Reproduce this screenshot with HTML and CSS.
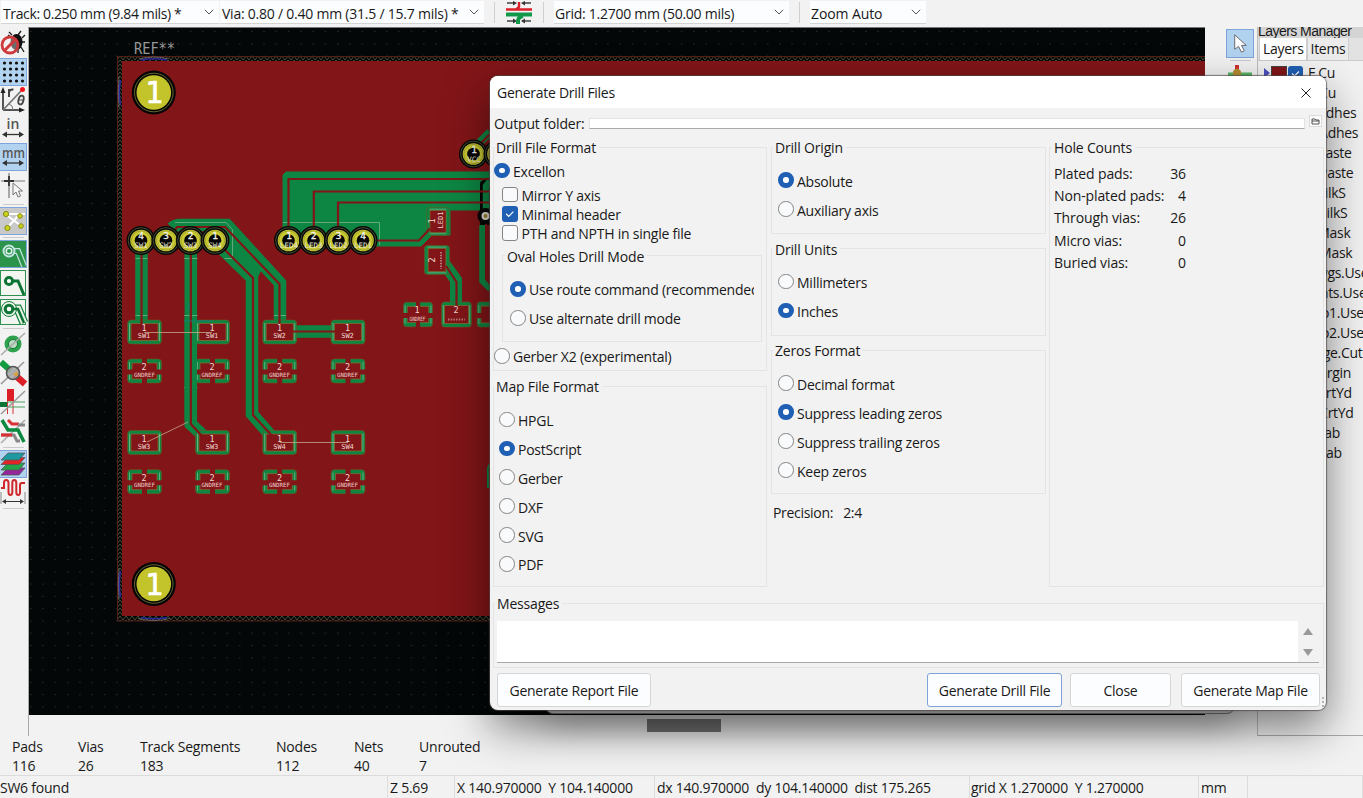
FILE: index.html
```html
<!DOCTYPE html>
<html lang="en">
<head>
<meta charset="utf-8">
<title>PCB Editor</title>
<link rel="stylesheet" href="styles.css">
</head>
<body>
<div class="app">
  <header class="topbar">
    <div class="combo combo-track"><span>Track: 0.250 mm (9.84 mils) *</span><svg class="chev" viewBox="0 0 10 6"><path d="M.8.8 5 5 9.2.8"/></svg></div>
    <div class="combo combo-via"><span>Via: 0.80 / 0.40 mm (31.5 / 15.7 mils) *</span><svg class="chev" viewBox="0 0 10 6"><path d="M.8.8 5 5 9.2.8"/></svg></div>
    <i class="vsep"></i>
    <svg class="width-icon" viewBox="0 0 26 25"><path d="M1 2h8m8 0h8M1 20h8m8 0h8" stroke="#444" stroke-width="1.300"/><path d="M7 0 11 2 7 4.500zM19 0 15 2l4 2.500zM7 17.500l4 2.500-4 2.500zM19 17.500 15 20l4 2.500z" fill="#333"/><path d="M0 8.500h26M10 8.500l3-2.500V1" stroke="#dc1f28" stroke-width="2.400" fill="none"/><path d="M0 13.500h26" stroke="#12984a" stroke-width="4"/><path d="M17 15q-5 1-5 5v3" stroke="#12984a" stroke-width="4" fill="none"/></svg>
    <i class="vsep"></i>
    <div class="combo combo-grid"><span>Grid: 1.2700 mm (50.00 mils)</span><svg class="chev" viewBox="0 0 10 6"><path d="M.8.8 5 5 9.2.8"/></svg></div>
    <i class="vsep"></i>
    <div class="combo combo-zoom"><span>Zoom Auto</span><svg class="chev" viewBox="0 0 10 6"><path d="M.8.8 5 5 9.2.8"/></svg></div>
  </header>

  <div class="workspace">
    <nav class="tools">
      <div class="tool"><svg viewBox="0 0 28 28"><g stroke="#1b1b1b" stroke-width="1.300" fill="none"><path d="M12 7 9 4M18 7l3-4M22 10l3-3M22 14h3M21 19l3 5M18 21v4M11 9 8 7"/></g><ellipse cx="16.500" cy="14" rx="6" ry="8" fill="#111"/><circle cx="10" cy="17" r="8" fill="#f2f2f2" fill-opacity=".4" stroke="#cf3a3c" stroke-width="2.800"/><path d="m4.500 22.500 11-11" stroke="#cf3a3c" stroke-width="3"/></svg></div>
      <div class="tool on"><svg viewBox="0 0 28 28"><g stroke="#111" stroke-width="3.200" stroke-linecap="round" stroke-dasharray="0 6"><path d="M4.500 5h19M4.500 11h19M4.500 17h19M4.500 23h19"/></g></svg></div>
      <div class="tool"><svg viewBox="0 0 28 28"><path d="M3 25V6M3 25h18" stroke="#222" stroke-width="1.500"/><path d="M.5 8 3 2l2.500 6zM19 22.500l6 2.500-6 2.500z" fill="#222"/><path d="M3 25 21 6" stroke="#777" stroke-width="1.800"/><path d="M9 19q4 1 4 6" stroke="#777" fill="none"/><circle cx="22.500" cy="4.500" r="2.500" fill="#f3141c"/><path d="M9 12V4m0 3q1-3 4.500-2.500" stroke="#444" stroke-width="2" fill="none"/><ellipse cx="21" cy="15" rx="2.500" ry="4.500" fill="none" stroke="#444" stroke-width="1.800" transform="rotate(15 21 15)"/><path d="M19 15h4" stroke="#444"/></svg></div>
      <div class="tool"><svg viewBox="0 0 28 28"><text x="6.500" y="15" class="unit" textLength="13">in</text><path d="M4 20.500h18" stroke="#333" stroke-width="1.300"/><path d="M7 17.500l-5 3 5 3zM19 17.500l5 3-5 3z" fill="#333"/></svg></div>
      <div class="tool on"><svg viewBox="0 0 28 28"><text x="2" y="15" class="unit" textLength="23" lengthAdjust="spacingAndGlyphs">mm</text><path d="M4 20h18" stroke="#333" stroke-width="1.300"/><path d="M7 17l-5 3 5 3zM19 17l5 3-5 3z" fill="#333"/></svg></div>
      <div class="tool after-gap"><svg viewBox="0 0 28 28"><path d="M1 9h24M9 1v8M9 9v17" stroke="#777" stroke-width="1.200"/><path d="M4 9h10M9 4v10" stroke="#333" stroke-width="1.800"/><path d="M13 11v12l3-3 2 5 2.500-1-2-5h4z" fill="#f6f6f6" stroke="#777"/></svg></div>
      <i class="hsep"></i>
      <div class="tool on grey"><svg viewBox="0 0 28 28"><path d="M5 7 20 18M7 21 19 8M5 7h20" stroke="#fff" stroke-width="2"/><g fill="#ccd31d" stroke="#858b12"><circle cx="6" cy="7" r="2.600"/><circle cx="20" cy="9" r="2.300"/><circle cx="7.500" cy="21" r="2.600"/><circle cx="21" cy="19" r="2.300"/></g></svg></div>
      <i class="hsep"></i>
      <div class="tool on green"><svg viewBox="0 0 28 28"><path d="M9 11h9l6 15" stroke="#c5e5e4" stroke-width="6" fill="none"/><path d="M9 11h9l6 15" stroke="#2c944a" stroke-width="3.600" fill="none"/><circle cx="9" cy="11" r="5.500" fill="#2c944a" stroke="#c5e5e4" stroke-width="2"/><circle cx="9" cy="11" r="2.800" fill="none" stroke="#e5f5f5" stroke-width="1.500"/></svg></div>
      <div class="tool framed after-one"><svg viewBox="0 0 28 28"><path d="M9 11h9l6 14" stroke="#0c7434" stroke-width="3" fill="none"/><circle cx="9" cy="11" r="3.600" fill="#fff" stroke="#0c7434" stroke-width="3"/></svg></div>
      <div class="tool framed"><svg viewBox="0 0 28 28"><path d="M9 10h9l6 14" stroke="#16823d" stroke-width="9" fill="none"/><path d="M9 10h9l6 14" stroke="#e9f3e7" stroke-width="6.500" fill="none"/><circle cx="9" cy="10" r="7.500" fill="#e9f3e7" stroke="#16823d"/><path d="M9 10h9l6 14" stroke="#0c7434" stroke-width="2.600" fill="none"/><circle cx="9" cy="10" r="3.800" fill="#fff" stroke="#0c7434" stroke-width="3"/></svg></div>
      <i class="hsep"></i>
      <div class="tool"><svg viewBox="0 0 28 28"><circle cx="13" cy="14" r="8.500" fill="#2da14c"/><circle cx="13" cy="14" r="4.500" fill="#b9dcc0" stroke="#14783a" stroke-width="1"/><path d="M1 25 25 3" stroke="#aaa" stroke-width="1.500"/></svg></div>
      <div class="tool after-one"><svg viewBox="0 0 28 28"><path d="M1 25 24 3" stroke="#999" stroke-width="1.600"/><path d="M1 3l10 9" stroke="#129c42" stroke-width="6"/><path d="m15 16 10 9" stroke="#dc1e27" stroke-width="6.500"/><circle cx="13" cy="14" r="6.500" fill="#aaa" fill-opacity=".88" stroke="#555" stroke-width="1.600"/><path d="m13 16 4-4 1 5z" fill="#dda22e"/></svg></div>
      <div class="tool"><svg viewBox="0 0 28 28"><path d="M7.500 12v14M13 12v14" stroke="#d43238"/><path d="M7 1h7v12H7z" fill="#dc1e27"/><path d="M0 14h7v5H0z" fill="#0c7434"/><path d="M7 14h18M7 19h18" stroke="#46a25d"/><path d="M1 26 25 3" stroke="#999" stroke-width="1.500"/></svg></div>
      <div class="tool after-one"><svg viewBox="0 0 28 28"><path d="M1 26 25 3" stroke="#aaa" stroke-width="1.500"/><path d="M8 3l4 4h7" stroke="#db3136" stroke-width="3" fill="none"/><path d="M18 8h7" stroke="#888" stroke-width="3" fill="none"/><path d="M1 18h13l3 6h3" stroke="#888" stroke-width="3" fill="none"/><path d="M1 18h11" stroke="#db3136" stroke-width="3"/><path d="m2 3 6 10h10l6 12" stroke="#0d8840" stroke-width="3.500" fill="none"/></svg></div>
      <i class="hsep tight"></i>
      <div class="tool on"><svg viewBox="0 0 28 28"><g stroke="#555" stroke-width=".8"><path d="m1 25 7-7h17l-6 7z" fill="#94259a"/><path d="m1 20 7-7h17l-6 7z" fill="#23a44b"/><path d="m1 14.500 7-7h17l-6 7z" fill="#e32427"/><path d="m1 10 7-7h17l-6 7z" fill="#1c9aa0"/></g></svg></div>
      <div class="tool"><svg viewBox="0 0 28 28"><path d="M1 11h3V6q0-3 2.200-3T8.500 6v9q0 3 1.900 3t1.900-3V6q0-3 2-3t2 3v9q0 3 1.900 3T20 15V8q0-2 2-2h3" stroke="#d0272d" stroke-width="2" fill="none"/><path d="M1 15v12M25 15v12" stroke="#888"/><path d="M3 24.500h20" stroke="#333"/><path d="m6 22-4 2.500 4 2.500zM20 22l4 2.500-4 2.500z" fill="#333"/></svg></div>
      <i class="hsep tight"></i>
    </nav>

    <main class="canvas">
      <svg class="board" viewBox="28 27 1177 688">
        <defs>
          <pattern id="dots" x="24.300" y="31" width="12.280" height="12.280" patternUnits="userSpaceOnUse"><rect x="6" width="1" height="1" fill="#394040"/></pattern>
          <pattern id="hatch" width="6" height="4" patternUnits="userSpaceOnUse"><path d="m0 0 3 4 3-4" stroke="#6b6a42" stroke-width=".7" fill="none"/></pattern>
          <g id="solid"><rect x="-17" y="-12" width="34" height="24" rx="3.500" fill="#0d8643" stroke="#73561f" stroke-width=".6"/><rect x="-13.500" y="-8.500" width="27" height="17" fill="#821518" stroke="#7e6c2f" stroke-width=".8"/><path d="M-15-9V9M15-9V9" stroke="#8fc09b" stroke-width=".7"/></g>
          <g id="thermal"><rect x="-17" y="-12" width="34" height="24" rx="3.500" fill="#0d8643" stroke="#73561f" stroke-width=".6"/><rect x="-12.500" y="-8" width="25" height="16" fill="#821518" stroke="#7e6c2f" stroke-width=".8"/><path d="M-15-9V9M15-9V9" stroke="#8fc09b" stroke-width=".7"/><path d="M0-13v26M-18 1h36" stroke="#821518" stroke-width="5"/></g>
          <g id="pin"><circle r="14.500" fill="#070806"/><circle r="12.800" fill="none" stroke="#5d6a48" stroke-width=".7"/><circle r="10.800" fill="#c7c832"/><circle r="9.600" fill="none" stroke="#85862c" stroke-width=".5"/><circle r="6.300" fill="#050505"/></g>
          <g id="hole"><circle r="22" fill="#050505"/><circle r="19.300" fill="none" stroke="#7d7c3c" stroke-width=".8"/><circle r="17.300" fill="#c3c32c"/></g>
        </defs>
        <rect x="28" y="27" width="1177" height="688" fill="#030708"/>
        <rect x="28" y="27" width="1177" height="688" fill="url(#dots)"/>
        <path d="M118 57h1087v4H122v555h1083v5H118z" fill="url(#hatch)"/>
        <path d="M1205 56.500H117.500V621H1205" fill="none" stroke="#6b2419" stroke-width=".8"/>
        <g fill="none" stroke-width="1"><path d="M141 60q13-2.500 26 0M120.500 80q-2.500 13 0 25M120.500 571q-2.500 13 0 26M141 617.500q13 2.500 26 0" stroke="#29299b" stroke-width="1.600"/><path d="M139 59q15-4 30 0M138 618.500q16 4 32 0M119 76q-1.500 16 0 32M119 568q-1.500 16 0 32" stroke="#8d8d8d" stroke-width=".6"/></g>
        <rect x="122" y="61" width="1083" height="555" fill="#821518"/>
        <text x="134" y="53.500" class="ref" textLength="41" lengthAdjust="spacingAndGlyphs">REF**</text>

        <g class="pour">
          <path d="M141.500 250v75M190.800 250v174l14 13M212 239l40 39v136l20 23M172 228q3-3 8-3h47l53 58v42M290 331.500h48" stroke-width="12.500"/>
          <path d="M223 243l3-15 36 40-4 8z" stroke="none" fill="#0d8643"/>
          <path d="M286 172h204v38h-40v25h-18l-11 11H283V175z" stroke="none" fill="#0d8643"/>
          <path d="M443 262l13 18v26" stroke-width="12"/>
          <path d="M478 144l12-12" stroke-width="8"/>
        </g>
        <path d="M175 222.500h51l6.500 7v29h-8M283 222.500h96.500V245M135.500 258.500h12M184 258.500h13.500M135.500 315.500h12M184 315.500h13.500M274 315.500h12M184 387.500h13.500" stroke="#8bb993" stroke-width=".7" fill="none"/>
        <path d="M480 225V184q0-4 5-4h5v45z" fill="#050505"/>
        <path d="M482.500 225v56l8 8M490 181l-4 5v30" stroke="#0d8643" stroke-width="6.500" fill="none"/><path d="M486 216v63l5 6" stroke="#821518" stroke-width="2" fill="none"/>
        <circle cx="485.500" cy="216" r="8" fill="#050505"/><circle cx="485.500" cy="216" r="4" fill="#e1dfd4"/><circle cx="485.500" cy="216" r="2" fill="#9d812f"/>

        <g><use href="#solid" x="144.500" y="332"/><use href="#solid" x="212.500" y="332"/><use href="#solid" x="279.700" y="332"/><use href="#solid" x="348" y="332"/><use href="#thermal" x="144.500" y="371"/><use href="#thermal" x="212.500" y="371"/><use href="#thermal" x="279.700" y="371"/><use href="#thermal" x="348" y="371"/><use href="#solid" x="144.500" y="442.500"/><use href="#solid" x="212.500" y="442.500"/><use href="#solid" x="279.700" y="442.500"/><use href="#solid" x="348" y="442.500"/><use href="#thermal" x="144.500" y="481.700"/><use href="#thermal" x="212.500" y="481.700"/><use href="#thermal" x="279.700" y="481.700"/><use href="#thermal" x="348" y="481.700"/></g>
        <g transform="translate(418 314.500) scale(.86 1.020)"><use href="#thermal"/></g><g transform="translate(456.500 314.500) scale(.88 1.050)"><use href="#solid"/></g><g transform="translate(492 314.500) scale(.88 1.050)"><use href="#thermal"/></g>
        <g transform="translate(438 221.500) rotate(90) scale(.82 .95)"><use href="#solid"/></g><g transform="translate(437 260) rotate(90) scale(.86 1.050)"><use href="#solid"/></g>
        <path d="M190.800 318v102" stroke="#0d8643" stroke-width="12.500"/>
        <g class="core"><path d="M141.500 250v78M190.800 250v174l14 15M218 243l35 35v137l22 24M172 234l5-7h48l54.500 57v42M292 331.500h46M288.500 235v-56H490M313.800 235v-43.500H490M338 235v-32.500H490M373 240.500h46l11-12M446 266l10.500 16v26M476 148l14-14"/></g>
        <path d="M144 332.500h68M147 442l41-20M280 442.500h68" stroke="#c5a688" stroke-width=".8"/>
        <path d="M186 309h3v-7M184 321h28" stroke="#197e83" stroke-width=".8" fill="none"/>
        <path d="M490 464q-3 4-2 10v14" stroke="#0d8643" stroke-width="2" fill="none"/>

        <g><use href="#pin" x="141" y="240.500"/><use href="#pin" x="166" y="240.500"/><use href="#pin" x="190.500" y="240.500"/><use href="#pin" x="215" y="240.500"/><use href="#pin" x="288.500" y="240.500"/><use href="#pin" x="313.500" y="240.500"/><use href="#pin" x="338.500" y="240.500"/><use href="#pin" x="363" y="240.500"/><use href="#pin" x="473.500" y="154"/><use href="#pin" x="498" y="154"/></g>
        <g class="pin-text"><text x="141" y="238.700">4</text><text x="166" y="238.700">3</text><text x="190.500" y="238.700">2</text><text x="215" y="238.700">1</text><text x="289" y="238.700">1</text><text x="313.500" y="238.700">2</text><text x="338.500" y="238.700">3</text><text x="363" y="238.700">4</text><text x="474" y="153">1</text></g>
        <g class="pin-net"><text x="141" y="248">SW1</text><text x="166" y="248">SW2</text><text x="190.500" y="248">SW3</text><text x="215" y="248">SW4</text><text x="289" y="247.500">LED4</text><text x="313.500" y="247.500">LED3</text><text x="338.500" y="247.500">LED2</text><text x="363" y="247.500">LED1</text><text x="474" y="162">VCC</text></g>
        <g class="pad-text"><text x="144" y="331">1</text><text x="212" y="331">1</text><text x="279.500" y="331">1</text><text x="347.500" y="331">1</text><text x="144" y="369.500">2</text><text x="212" y="369.500">2</text><text x="279.500" y="369.500">2</text><text x="347.500" y="369.500">2</text><text x="144" y="442">1</text><text x="212" y="442">1</text><text x="279.500" y="442">1</text><text x="347.500" y="442">1</text><text x="144" y="480.500">2</text><text x="212" y="480.500">2</text><text x="279.500" y="480.500">2</text><text x="347.500" y="480.500">2</text><text x="417" y="313">1</text><text x="456" y="313">2</text><text transform="translate(435 221) rotate(-90)">1</text><text transform="translate(435 260) rotate(-90)">2</text></g>
        <g class="pad-net"><text x="144" y="338">SW1</text><text x="212" y="338">SW1</text><text x="279.500" y="338">SW2</text><text x="347.500" y="338">SW2</text><text x="144" y="448.500">SW3</text><text x="212" y="448.500">SW3</text><text x="279.500" y="448.500">SW4</text><text x="347.500" y="448.500">SW4</text><text transform="translate(443 220) rotate(-90)">LED1</text></g>
        <g class="pad-gnd"><text x="144.500" y="376.500">GNDREF</text><text x="212" y="376.500">GNDREF</text><text x="279.500" y="376.500">GNDREF</text><text x="347.500" y="376.500">GNDREF</text><text x="144.500" y="487">GNDREF</text><text x="212" y="487">GNDREF</text><text x="279.500" y="487">GNDREF</text><text x="347.500" y="487">GNDREF</text><text x="417.500" y="321" textLength="16" lengthAdjust="spacingAndGlyphs">GNDREF</text></g>
        <path d="M448 319.500h17M441 252v17" stroke="#b9777a" stroke-width="2" stroke-dasharray="1.500 1.200"/>
        <use href="#hole" x="153.800" y="92.500"/><use href="#hole" x="153.800" y="584"/>
        <text x="154" y="102.800" class="hole-text">1</text><text x="154" y="594.800" class="hole-text">1</text>
      </svg>
    </main>

    <nav class="draw-tools">
      <div class="cursor"><svg viewBox="0 0 28 28"><path d="M8 5v15l4-3 3 6 3-1.500-3-5.500h5z" fill="#fff" stroke="#666"/></svg></div>
      <i class="hsep"></i>
      <svg class="via-tool" viewBox="0 0 24 16"><path d="M9 0v6" stroke="#cf3030" stroke-width="4"/><path d="M0 9.500h24" stroke="#55b463" stroke-width="4"/><circle cx="9" cy="8" r="4.200" fill="#b58d32"/></svg>
    </nav>

    <aside class="layers">
      <div class="caption"><span>Layers Manager</span></div>
      <div class="tabs"><span class="tab active">Layers</span><span class="tab">Items</span></div>
      <div class="layer-list">
        <div class="layer"><i class="arrow"></i><i class="swatch"></i><svg class="tick" viewBox="0 0 15 15"><path d="m4 7.500 2.500 2.500L11 5.500"/></svg><span>F.Cu</span></div>
        <div class="layer">B.Cu</div><div class="layer">F.Adhes</div><div class="layer">B.Adhes</div><div class="layer">F.Paste</div><div class="layer">B.Paste</div><div class="layer">F.SilkS</div><div class="layer">B.SilkS</div><div class="layer">F.Mask</div><div class="layer">B.Mask</div><div class="layer">Dwgs.User</div><div class="layer">Cmts.User</div><div class="layer">Eco1.User</div><div class="layer">Eco2.User</div><div class="layer">Edge.Cuts</div><div class="layer">Margin</div><div class="layer">F.CrtYd</div><div class="layer">B.CrtYd</div><div class="layer">F.Fab</div><div class="layer">B.Fab</div>
      </div>
    </aside>
  </div>

  <section class="board-info">
    <div class="scroll-thumb"></div>
    <dl class="stats">
      <div class="s-pads"><dt>Pads</dt><dd>116</dd></div><div class="s-vias"><dt>Vias</dt><dd>26</dd></div><div class="s-track"><dt>Track Segments</dt><dd>183</dd></div><div class="s-nodes"><dt>Nodes</dt><dd>112</dd></div><div class="s-nets"><dt>Nets</dt><dd>40</dd></div><div><dt>Unrouted</dt><dd>7</dd></div>
    </dl>
  </section>
  <footer class="status"><span>SW6 found</span><span>Z 5.69</span><span>X 140.970000  Y 104.140000</span><span>dx 140.970000  dy 104.140000  dist 175.265</span><span>grid X 1.270000  Y 1.270000</span><span>mm</span><span></span></footer>

  <div class="back-window"></div>
  <div class="dialog" role="dialog">
    <div class="title"><span>Generate Drill Files</span><svg viewBox="0 0 10 10"><path d="m.5.5 9 9m0-9-9 9"/></svg></div>
    <div class="output"><label>Output folder:</label><div class="path-field"></div><div class="browse"><svg viewBox="0 0 9 7"><path d="M1 6V1h3l1 1h3v4zM1 3h7" fill="none" stroke="#444" stroke-width=".9"/></svg></div></div>
    <div class="columns">
      <div class="column">
        <fieldset class="drill-format"><legend>Drill File Format</legend>
          <div class="opt excellon"><i class="radio sel"></i>Excellon</div>
          <div class="checks"><div><i class="check"></i>Mirror Y axis</div><div><i class="check sel"><svg viewBox="0 0 15 15"><path d="m4 7.500 2.500 2.500L11 5.500"/></svg></i>Minimal header</div><div><i class="check"></i>PTH and NPTH in single file</div></div>
          <fieldset class="oval"><legend>Oval Holes Drill Mode</legend><div class="opt clip"><i class="radio sel"></i><span>Use route command (recommended)</span></div><div class="opt"><i class="radio"></i>Use alternate drill mode</div></fieldset>
          <div class="opt gerber"><i class="radio"></i>Gerber X2 (experimental)</div>
        </fieldset>
        <fieldset class="map-format"><legend>Map File Format</legend><div class="opt"><i class="radio"></i>HPGL</div><div class="opt"><i class="radio sel"></i>PostScript</div><div class="opt"><i class="radio"></i>Gerber</div><div class="opt"><i class="radio"></i>DXF</div><div class="opt"><i class="radio"></i>SVG</div><div class="opt"><i class="radio"></i>PDF</div></fieldset>
      </div>
      <div class="column mid">
        <fieldset class="short"><legend>Drill Origin</legend><div class="opt"><i class="radio sel"></i>Absolute</div><div class="opt"><i class="radio"></i>Auxiliary axis</div></fieldset>
        <fieldset class="short"><legend>Drill Units</legend><div class="opt"><i class="radio"></i>Millimeters</div><div class="opt"><i class="radio sel"></i>Inches</div></fieldset>
        <fieldset class="zeros"><legend>Zeros Format</legend><div class="opt"><i class="radio"></i>Decimal format</div><div class="opt"><i class="radio sel"></i>Suppress leading zeros</div><div class="opt"><i class="radio"></i>Suppress trailing zeros</div><div class="opt"><i class="radio"></i>Keep zeros</div></fieldset>
        <div class="precision"><span>Precision:</span><span>2:4</span></div>
      </div>
      <div class="column">
        <fieldset class="holes"><legend>Hole Counts</legend><div><span>Plated pads:</span><b>36</b></div><div><span>Non-plated pads:</span><b>4</b></div><div><span>Through vias:</span><b>26</b></div><div><span>Micro vias:</span><b>0</b></div><div><span>Buried vias:</span><b>0</b></div></fieldset>
      </div>
    </div>
    <fieldset class="messages"><legend>Messages</legend><div class="log"><div class="bar"><i class="up"></i><i class="down"></i></div></div></fieldset>
    <div class="buttons"><div class="btn report">Generate Report File</div><div class="btn primary">Generate Drill File</div><div class="btn close">Close</div><div class="btn map">Generate Map File</div></div>
    <i class="grip"></i>
  </div>
</div>
</body>
</html>
```
FILE: styles.css
```css
* { box-sizing: border-box; }
body { margin: 0; overflow: hidden; background: #f2f2f2; color: #191919; font: 14px/20px "Open Sans", "Noto Sans", sans-serif; letter-spacing: -.3px; }
i { display: block; font-style: normal; }
svg { display: block; }
.app { position: relative; width: 1363px; height: 798px; overflow: hidden; display: flex; flex-direction: column; }

.topbar { height: 27px; flex: none; display: flex; align-items: flex-start; padding: 1px 0 0 1px; }
.combo { height: 23px; flex: none; background: #fcfdff; border-bottom: 1px solid #d4d4d4; display: flex; align-items: center; justify-content: space-between; padding: 3px 5px 0 2px; white-space: nowrap; }
.chev { width: 10px; height: 6px; margin-bottom: 3px; fill: none; stroke: #555; stroke-width: 1; }
.combo-track { width: 218px; margin-right: 1px; letter-spacing: -.37px; }
.combo-via { width: 264px; letter-spacing: -.23px; }
.vsep { width: 1px; height: 21px; background: #cfcfcf; margin: 1px 10px 0; }
.width-icon { width: 26px; height: 25px; margin: 0 1px; }
.combo-grid { width: 235px; padding-left: 1px; letter-spacing: -.26px; }
.combo-zoom { width: 116px; padding-left: 1px; letter-spacing: -.1px; }

.workspace { display: grid; grid-template-columns: 28px 1177px 52px 106px; height: 688px; flex: none; }
.tools { padding-top: 2px; overflow: hidden; display: flex; flex-direction: column; }
.tools > * { flex: none; }
.tool { width: 27px; height: 28px; margin-bottom: .5px; }
.tool svg { width: 28px; height: 28px; margin-top: -1px; }
.tool.on { border: 1px solid #7ea6dc; background: #b2d3f0; margin-left: -1px; width: 28px; }
.tool.grey { background: #c9c9c9; }
.tool.green { background: #2c944a; }
.tool.framed { border: 1px solid #2f9150; background: #f3f5f0; width: 26px; height: 26px; margin: 1px 0 1.5px; }
.tool.framed svg { margin-left: -1px; }
.tool.after-gap { margin-top: 1.5px; }
.tool.after-one { margin-top: .5px; }
.tool.framed.after-one { margin-top: 1.5px; }
.unit { font: 600 14px "Open Sans", sans-serif; fill: #555; letter-spacing: 0; }
.hsep { width: 21px; height: 1px; background: #cbcbcb; margin: 2px 0 2px 3px; }
.hsep.tight { margin: 1px 0 1.5px 3px; }
.canvas { border-top: 1px solid #777; overflow: hidden; border-left: 1px solid #aaa; }
.board { width: 1177px; height: 688px; margin: -1px 0 0 -1px; }
.pour path { fill: none; stroke: #0d8643; }
.pour path[fill] { fill: #0d8643; }
.core path { fill: none; stroke: #821518; stroke-width: 2.2; }
.ref { font: 15px "DejaVu Sans Mono", monospace; fill: #979797; }
.board text { letter-spacing: 0; }
.pin-text, .pin-net, .pad-text, .pad-net, .pad-gnd { text-anchor: middle; font-family: "DejaVu Sans Mono", monospace; fill: #f2f2ee; }
.pin-text { font-size: 9.5px; stroke: #f2f2ee; stroke-width: .3; }
.pin-net { font-size: 7.5px; fill: #e6e6da; }
.pad-text { font-size: 8.5px; fill: #efd9d3; }
.pad-net { font-size: 7px; fill: #efd9d3; }
.pad-gnd { font-size: 5.8px; fill: #efd0cb; }
.hole-text { font: 30px "DejaVu Sans Mono", monospace; text-anchor: middle; fill: #fff; stroke: #fff; stroke-width: .6; }

.draw-tools { padding: 2px 0 0 21px; }
.cursor { width: 28px; height: 29px; background: #b2d3f0; border: 1px solid #7ea6dc; }
.cursor svg { width: 27px; height: 27px; }
.draw-tools .hsep { margin: 2px 0 4px 4px; }
.via-tool { width: 24px; height: 16px; margin-left: 2px; }

.layers { height: 709px; border-left: 1px solid #bdbdbd; border-bottom: 1px solid #aaa; overflow: hidden; }
.caption { height: 11px; overflow: hidden; background: #d4d4d4; white-space: nowrap; font: 14px/20px "Liberation Sans", sans-serif; }
.caption span { display: block; margin-top: -6px; padding-left: 0; letter-spacing: -.55px; }
.tabs { height: 23px; display: flex; background: #e2e2e2; border-bottom: 1px solid #ccc; }
.tab { padding: 1px 3px 0; border: 1px solid #cfcfcf; border-width: 0 1px; background: #ececec; }
.tab.active { background: #fff; margin-left: 1px; padding: 1px 2px 0 3px; }
.layer-list { padding: 1px 0 0 49px; margin-top: 1px; }
.layer { height: 20px; line-height: 20px; white-space: nowrap; display: flex; align-items: center; }
.layer:first-child { margin-left: -43px; }
.arrow { border: 5px solid transparent; border-left: 6px solid #4b51c4; border-right: 0; }
.swatch { width: 16px; height: 15px; background: #821518; border: 1px solid #444; margin-left: 1px; }
.tick { width: 15px; height: 15px; background: #1f5fb4; border-radius: 3px; margin: 0 5px 0 1px; }
.tick path, .check path { fill: none; stroke: #fff; stroke-width: 1.1; }

.board-info { height: 60px; flex: none; padding-top: 4px; }
.scroll-thumb { width: 74px; height: 13px; margin-left: 647px; background: #777; }
.stats { display: flex; margin: 5px 0 0 12px; line-height: 19px; letter-spacing: -.2px; }
.stats dd { margin: 0; }
.s-pads { width: 66px; } .s-vias { width: 62px; } .s-track { width: 136px; } .s-nodes { width: 78px; } .s-nets { width: 65px; }
.status { height: 23px; border-top: 1px solid #dcdcdc; display: grid; grid-template-columns: 388px 67px 200px 315px 229px 49px 1fr; line-height: 24px; white-space: pre; letter-spacing: -.24px; }
.status span { border-right: 1px solid #ddd; padding-left: 2px; }
.status span:first-child { padding-left: 0; }
.status span:nth-child(5) { padding-left: 1px; }

.back-window { position: absolute; left: 545px; top: 690px; width: 690px; height: 24px; background: #c9c9c9; border: 1px solid #777; border-radius: 8px; box-shadow: 0 8px 34px rgba(0,0,0,.35); }
.dialog { position: absolute; left: 490px; top: 76px; width: 836px; height: 634px; background: #f2f2f2; border-radius: 8px; box-shadow: 0 0 1px 1px rgba(80,70,70,.7), 0 18px 44px rgba(0,0,0,.5); display: flex; flex-direction: column; }
.title { height: 32px; background: #fff; border-radius: 8px 8px 0 0; display: flex; align-items: center; justify-content: space-between; padding: 1px 15px 0 7px; flex: none; letter-spacing: -.28px; }
.title svg { width: 10px; height: 10px; stroke: #222; fill: none; stroke-width: 1; }
.output { height: 29px; flex: none; padding: 6px 4px 0 4px; display: flex; letter-spacing: -.15px; }
.output label { width: 95px; }
.path-field { width: 717px; height: 11px; margin-top: 4px; background: #fff; border: 1px solid #e4e4e4; border-bottom-color: #aaa; }
.browse { width: 13px; height: 12px; margin: 1px 0 0 4px; background: #fcfcfc; border: 1px solid #ddd; padding: 2px 1px; }
.browse svg { width: 9px; height: 7px; }
.columns { display: grid; grid-template-columns: 274px 276px 275px; column-gap: 3px; padding-left: 3px; height: 450px; flex: none; }
.mid { padding-left: 1px; }
fieldset { margin: 0; padding: 0; border: 1px solid #e4e4e4; min-width: 0; }
legend { height: 20px; line-height: 21px; padding: 0 3px 0 2px; margin-left: 0; letter-spacing: -.18px; }
.opt { height: 29px; display: flex; align-items: center; letter-spacing: -.24px; white-space: nowrap; }
.radio { width: 15.5px; height: 15.5px; margin: -3px 3.5px 0 0; border: 1px solid #858585; border-radius: 50%; background: #f8fafc; flex: none; }
.radio.sel { border: 5px solid #1f5fb4; background: #fff; }
.drill-format { height: 234px; }
.excellon { margin: 1px 0 0; height: 28px; }
.checks { padding-left: 8px; margin-bottom: 3px; letter-spacing: -.24px; }
.checks div { height: 19.3px; display: flex; align-items: center; white-space: nowrap; }
.check { width: 15.5px; height: 15.5px; border: 1px solid #858585; border-radius: 3px; background: #f8fafc; margin: -2px 4px 0 0; flex: none; }
.check.sel { border: 0; background: #1f5fb4; }
.oval { margin: -1px 4px 0 8px; height: 96px; padding-left: 7px; }
.oval legend { margin-left: -5px; }
.oval .opt:nth-of-type(1) { margin-top: 10px; }
.clip { width: 244px; overflow: hidden; }
.gerber { margin-left: 0; margin-top: 1px; }
.map-format { height: 211px; margin-top: 5px; padding-left: 5px; }
.map-format legend { margin-left: -5px; }
.map-format .opt:nth-of-type(1) { margin-top: 10.5px; }
.map-format .opt { height: 28.9px; }
.short { height: 97px; margin-bottom: 4.5px; padding-left: 6px; }
.short legend, .zeros legend { margin-left: -5px; }
.short .opt:nth-of-type(1), .zeros .opt:nth-of-type(1) { margin-top: 10px; }
.zeros { height: 154px; padding-left: 6px; }
.precision { display: flex; gap: 10px; padding: 9px 0 0 2px; letter-spacing: -.3px; }
.holes { height: 450px; padding-left: 4px; }
.holes legend { margin-left: -2px; }
.holes div { height: 22.4px; line-height: 22.4px; width: 132px; display: flex; justify-content: space-between; letter-spacing: -.12px; }
.holes div:nth-of-type(1) { margin-top: 5.5px; }
.holes b { font-weight: 400; }
.messages { height: 75px; margin: 6px 2px 0 3px; padding: 0 4px 0 3px; flex: none; }
.messages legend { margin-left: -2px; }
.log { height: 42px; margin-top: 8px; background: #fff; border-bottom: 1px solid #aaa; display: flex; justify-content: flex-end; }
.bar { width: 21px; background: #f2f2f2; display: flex; flex-direction: column; align-items: center; justify-content: space-between; padding: 7px 2px 6px 0; }
.up, .down { border: 5px solid transparent; border-top: 0; border-bottom: 7px solid #999; }
.down { border-bottom: 0; border-top: 7px solid #999; }
.buttons { display: flex; margin: 5px 6px 0 7px; flex: none; }
.btn { height: 34px; border: 1px solid #d6d6d6; border-radius: 3px; background: #fcfdff; text-align: center; line-height: 34px; letter-spacing: -.28px; }
.report { width: 154px; margin-right: 276px; }
.primary { width: 135px; border-color: #7ea2d9; margin-right: 8px; }
.close { width: 101px; margin-right: 10px; }
.map { width: 139px; }
.grip { position: absolute; right: 2px; bottom: 3px; width: 2px; height: 10px; background: repeating-linear-gradient(#b5b5b5 0 2px, transparent 2px 4px); }
```
